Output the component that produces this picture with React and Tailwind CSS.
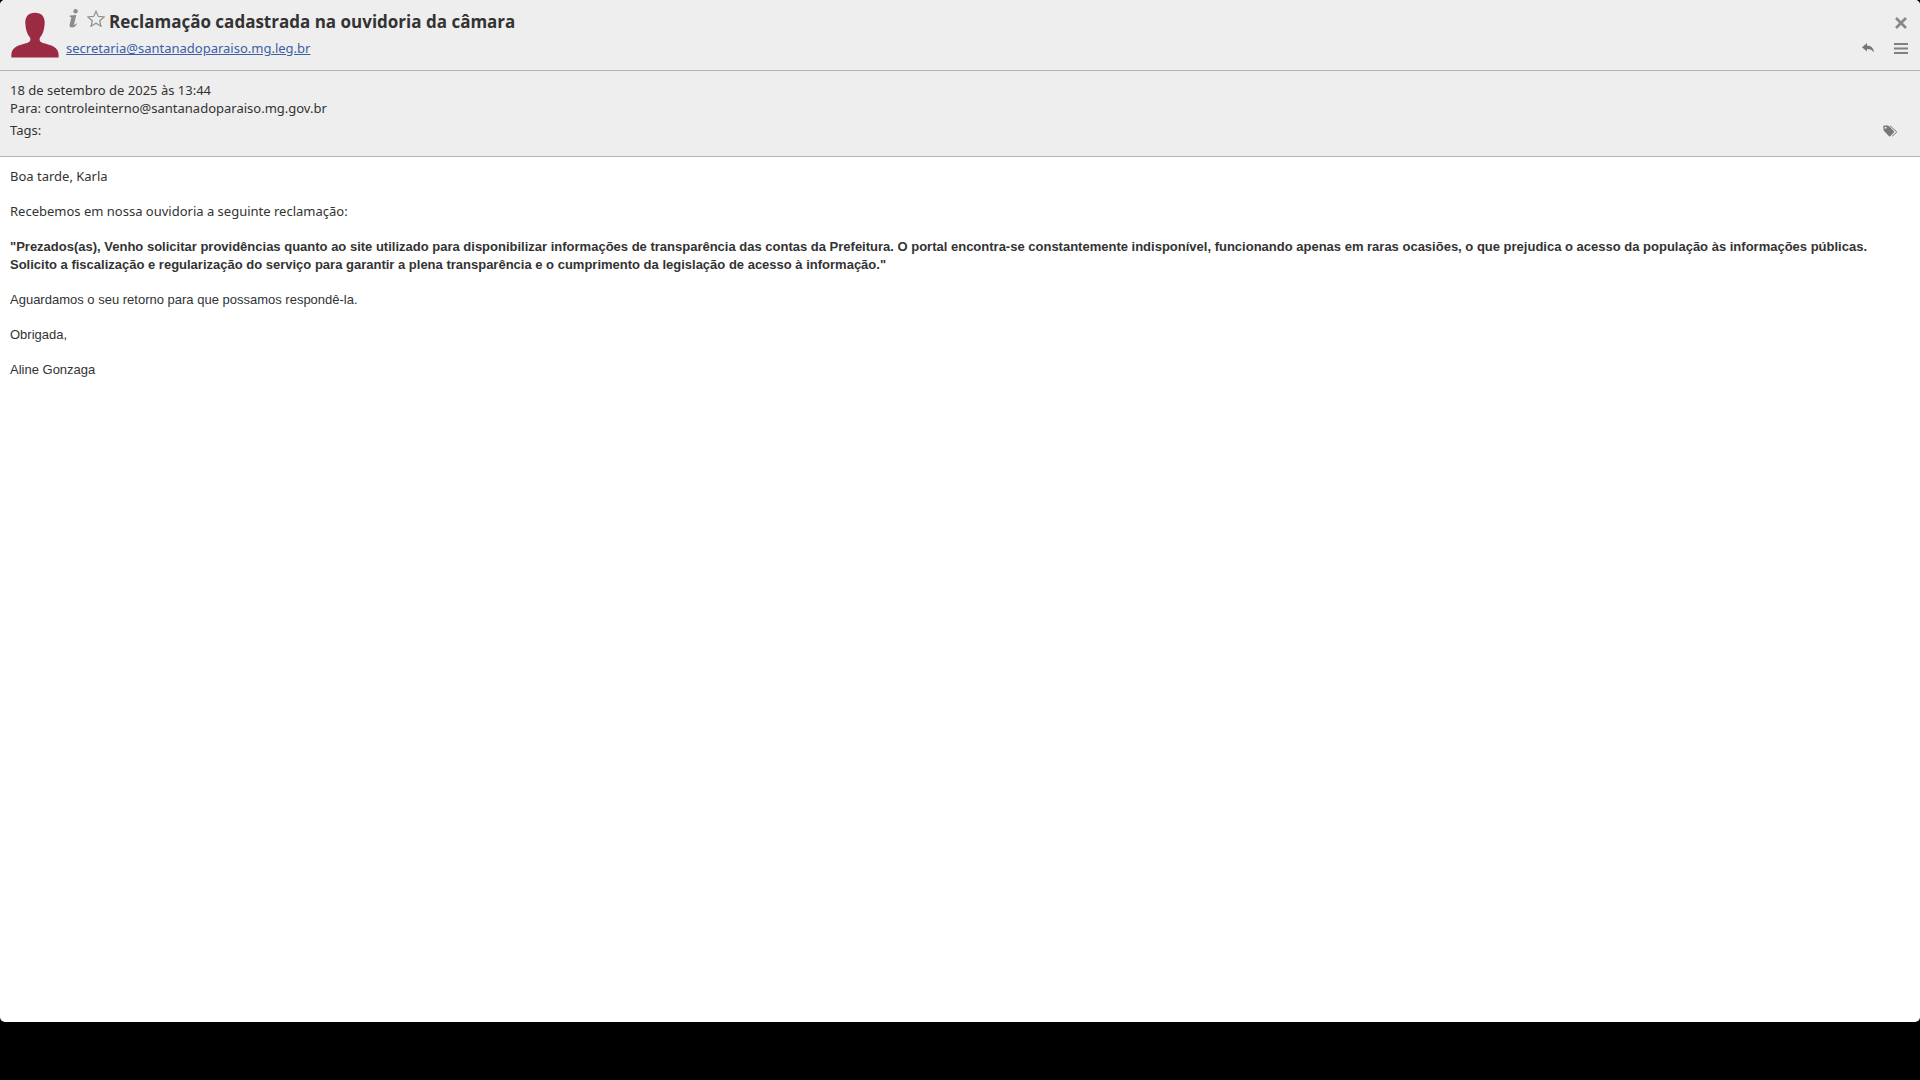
function Avatar() {
  return (
    <svg viewBox="0 0 48 46" className="h-[46px] w-12 shrink-0 fill-[#9b2b43]" role="img" aria-label="Remetente">
      <path d="M24 .7C17.500.7 14 4.500 14.300 11.500c.3 6 2 11 4.700 14 1 2.500.3 4.300-3 5.500C8 33.300.3 34.500.3 43.500c0 1.200.2 2 .2 2h47s.2-.8.2-2C47.700 34.500 40 33.300 32 31c-3.300-1.200-4-3-3-5.500 2.700-3 4.400-8 4.700-14C34 4.500 30.500.7 24 .7Z" />
    </svg>
  );
}

function Info() {
  return (
    <svg viewBox="0 0 10 19" className="h-[19px] w-[10px] fill-[#8c8c8c]" aria-hidden="true">
      <circle cx="6.600" cy="2.300" r="2.200" />
      <path d="M.8 6.600 7.300 6 5.200 14.800c-.2 1 .1 1.300.6 1 .6-.3 1.100-.9 1.700-1.600l.7.500C6.800 17 5.200 18.500 3 18.500c-2 0-2.800-1.300-2.300-3.300l1.500-5.900c.2-.9 0-1.500-1.600-1.600Z" />
    </svg>
  );
}

function Star() {
  return (
    <svg viewBox="0 0 18 17" className="h-[17px] w-[18px] fill-none stroke-[#8c8c8c]" aria-hidden="true">
      <path d="m9 1.300 2.200 5 5.900.6-4.400 3.800 1.300 5.500L9 13.300l-5 2.900 1.300-5.500L.9 6.900l5.900-.6Z" strokeWidth="1.200" />
    </svg>
  );
}

function Close() {
  return (
    <svg viewBox="0 0 12 12" className="size-3 stroke-[#888]" aria-hidden="true">
      <path d="m1 1 10 10M11 1 1 11" strokeWidth="2.700" />
    </svg>
  );
}

function Reply() {
  return (
    <svg viewBox="0 0 12 10" className="h-[10px] w-3 fill-[#777]" aria-hidden="true">
      <path d="M0 4.200 5 0v2.400c4 .1 6.600 2.400 7 7.100C10.300 7 8.300 6 5 6v2.500Z" />
    </svg>
  );
}

function Menu() {
  return (
    <svg viewBox="0 0 14 12" className="h-3 w-[14px] fill-[#808080]" aria-hidden="true">
      <path d="M0 0h14v2H0ZM0 4.500h14v2H0ZM0 9h14v2H0Z" />
    </svg>
  );
}

function Tags() {
  return (
    <svg viewBox="0 0 15 12" className="h-3 w-[15px]" aria-hidden="true">
      <path fill="#777" fillRule="evenodd" d="M.3 1.200Q.3.500 1 .4L5.300.6 11 6.200q.5.600 0 1.100L7.200 11.300q-.6.500-1.200 0L.6 5.600ZM2.600 1.700a1 1 0 1 0 0 2 1 1 0 0 0 0-2Z" />
      <path fill="none" stroke="#777" strokeWidth="1" d="m7 .8 6.300 5.500q.7.700 0 1.300L9 11.300" />
    </svg>
  );
}

export default function App() {
  return (
    <div className="flex min-h-screen flex-col bg-black pb-[58px] font-['Noto_Sans',sans-serif] text-[13px] leading-[18px] text-[#333]">
      <main className="flex grow flex-col overflow-hidden rounded-[5px] bg-white">
        <header className="flex border-b border-[#b5b5b5] bg-[#eee] py-3 pr-3 pl-[11px]">
          <Avatar />
          <div className="ml-[7px] min-w-0 grow">
            <div className="-mt-1 flex items-center">
              <button type="button" aria-label="Informações" className="ml-[3px] pb-2"><Info /></button>
              <button type="button" aria-label="Favorito" className="ml-2 pb-2"><Star /></button>
              <h1 className="ml-1 font-['Open_Sans','Noto_Sans',sans-serif] text-[17px] leading-7 font-bold">Reclamação cadastrada na ouvidoria da câmara</h1>
            </div>
            <a href="mailto:secretaria@santanadoparaiso.mg.leg.br" className="mt-[3px] block w-fit text-[#3a5fa5] underline">secretaria@santanadoparaiso.mg.leg.br</a>
          </div>
          <div className="flex flex-col items-end gap-[14px] pt-[5px]">
            <button type="button" aria-label="Fechar" className="mr-px"><Close /></button>
            <div className="flex items-start gap-5">
              <button type="button" aria-label="Responder"><Reply /></button>
              <button type="button" aria-label="Menu"><Menu /></button>
            </div>
          </div>
        </header>
        <section className="border-b border-[#b5b5b5] bg-[#eee] px-[10px] pt-[10px] pb-4">
          <p>18 de setembro de 2025 às 13:44</p>
          <p>Para: controleinterno@santanadoparaiso.mg.gov.br</p>
          <div className="mt-1 flex items-end justify-between pr-3">
            <span className="pb-px">Tags:</span>
            <button type="button" aria-label="Editar tags" className="pb-[3px]"><Tags /></button>
          </div>
        </section>
        <article className="flex flex-col gap-[17px] p-[10px]">
          <p>Boa tarde, Karla</p>
          <p>Recebemos em nossa ouvidoria a seguinte reclamação:</p>
          <div className="flex flex-col gap-[17px] pt-px font-['Liberation_Sans',Arial,sans-serif]">
            <p className="font-bold">
              "Prezados(as), Venho solicitar providências quanto ao site utilizado para disponibilizar informações de transparência das contas da Prefeitura. O portal encontra-se constantemente indisponível, funcionando apenas em raras ocasiões, o que prejudica o acesso da população às informações públicas. Solicito a fiscalização e regularização do serviço para garantir a plena transparência e o cumprimento da legislação de acesso à informação."
            </p>
            <p>Aguardamos o seu retorno para que possamos respondê-la.</p>
            <p>Obrigada,</p>
            <p>Aline Gonzaga</p>
          </div>
        </article>
      </main>
    </div>
  );
}
